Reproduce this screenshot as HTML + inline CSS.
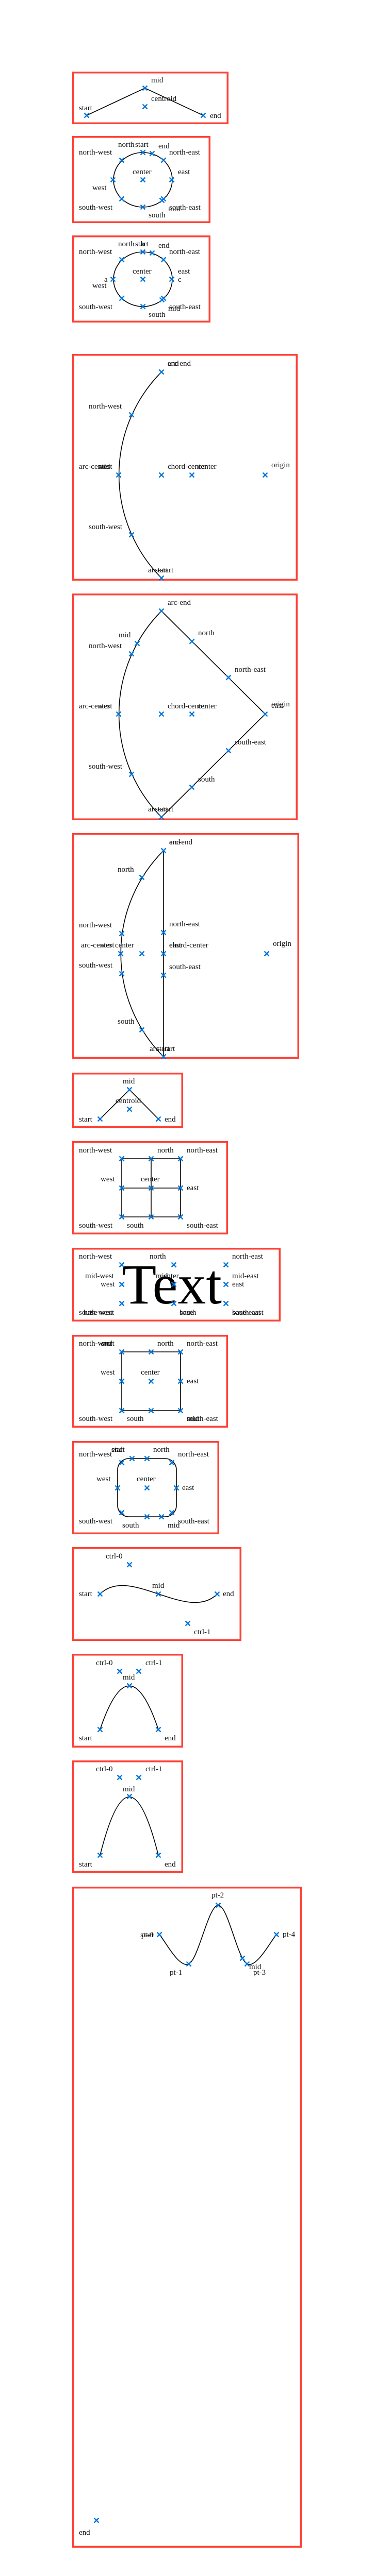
<!DOCTYPE html>
<html><head><meta charset="utf-8"><style>
html,body{margin:0;padding:0;background:#fff;width:727px;height:5175px;overflow:hidden;}
svg{display:block;position:absolute;left:0;top:0}
text{font-family:"Liberation Serif",serif;font-size:15px;fill:#111;}
.b{fill:none;stroke:#ff4136;stroke-width:3.5}
.l{fill:none;stroke:#000;stroke-width:1.6}
.m{fill:none;stroke:#0074d9;stroke-width:2.3}
</style></head><body>
<svg width="727" height="5175" viewBox="0 0 727 5175" xmlns="http://www.w3.org/2000/svg" overflow="hidden">
<defs><path id="x" class="m" d="M-4.5,-4.5L4.5,4.5M4.5,-4.5L-4.5,4.5"/></defs>

<rect class="b" x="141.75" y="140.75" width="299.5" height="98.5"/>
<path class="l" d="M168,224L281,171L394,224"/>
<use href="#x" x="168" y="224"/><use href="#x" x="281" y="171"/><use href="#x" x="281" y="207"/><use href="#x" x="394" y="224"/>
<text x="293" y="160">mid</text><text x="293" y="196">centroid</text><text x="153" y="214">start</text><text x="407" y="229">end</text>

<rect class="b" x="141.75" y="265.75" width="264.5" height="165.5"/>
<ellipse class="l" cx="277" cy="349" rx="57" ry="53"/>
<use href="#x" x="277" y="296"/><use href="#x" x="295" y="298"/><use href="#x" x="236" y="311"/><use href="#x" x="317" y="311"/><use href="#x" x="219" y="349"/><use href="#x" x="277" y="349"/><use href="#x" x="333" y="349"/><use href="#x" x="236" y="386"/><use href="#x" x="317" y="386"/><use href="#x" x="314" y="389"/><use href="#x" x="277" y="402"/>
<text x="229" y="285">north</text><text x="262" y="285">start</text><text x="307" y="288">end</text><text x="153" y="300">north-west</text><text x="328" y="300">north-east</text><text x="257" y="338">center</text><text x="345" y="338">east</text><text x="179" y="369">west</text><text x="153" y="407">south-west</text><text x="328" y="407">south-east</text><text x="326" y="410">mid</text><text x="288" y="422">south</text>

<rect class="b" x="141.75" y="458.75" width="264.5" height="165.5"/>
<ellipse class="l" cx="277" cy="542" rx="57" ry="53"/>
<use href="#x" x="277" y="489"/><use href="#x" x="295" y="491"/><use href="#x" x="236" y="504"/><use href="#x" x="317" y="504"/><use href="#x" x="219" y="542"/><use href="#x" x="277" y="542"/><use href="#x" x="333" y="542"/><use href="#x" x="236" y="579"/><use href="#x" x="317" y="579"/><use href="#x" x="314" y="582"/><use href="#x" x="277" y="595"/>
<text x="229" y="478">north</text><text x="262" y="478">start</text><text x="273" y="478">b</text><text x="307" y="481">end</text><text x="153" y="493">north-west</text><text x="328" y="493">north-east</text><text x="257" y="531">center</text><text x="345" y="531">east</text><text x="202" y="547">a</text><text x="345" y="547">c</text><text x="179" y="559">west</text><text x="153" y="600">south-west</text><text x="328" y="600">south-east</text><text x="326" y="603">mid</text><text x="288" y="615">south</text>

<rect class="b" x="141.75" y="688.75" width="433.5" height="436.5"/>
<path class="l" d="M313,1122A284,284 0 0 1 313,722"/>
<use href="#x" x="313" y="722"/><use href="#x" x="255" y="805"/><use href="#x" x="230" y="922"/><use href="#x" x="313" y="922"/><use href="#x" x="372" y="922"/><use href="#x" x="514" y="922"/><use href="#x" x="255" y="1038"/><use href="#x" x="313" y="1122"/>
<text x="325" y="710">arc-end</text><text x="325" y="710">end</text><text x="172" y="793">north-west</text><text x="153" y="910">arc-center</text><text x="190" y="910">west</text><text x="190" y="910">mid</text><text x="325" y="910">chord-center</text><text x="383" y="910">center</text><text x="526" y="907">origin</text><text x="172" y="1027">south-west</text><text x="287" y="1111">arc-start</text><text x="300" y="1111">start</text>

<rect class="b" x="141.75" y="1153.75" width="433.5" height="436.5"/>
<path class="l" d="M514,1386L313,1586A284,284 0 0 1 313,1186Z"/>
<use href="#x" x="313" y="1186"/><use href="#x" x="266" y="1249"/><use href="#x" x="255" y="1269"/><use href="#x" x="372" y="1245"/><use href="#x" x="443" y="1315"/><use href="#x" x="230" y="1386"/><use href="#x" x="313" y="1386"/><use href="#x" x="372" y="1386"/><use href="#x" x="514" y="1386"/><use href="#x" x="443" y="1457"/><use href="#x" x="372" y="1528"/><use href="#x" x="255" y="1503"/><use href="#x" x="313" y="1586"/>
<text x="325" y="1174">arc-end</text><text x="230" y="1237">mid</text><text x="172" y="1258">north-west</text><text x="384" y="1233">north</text><text x="455" y="1304">north-east</text><text x="153" y="1375">arc-center</text><text x="190" y="1375">west</text><text x="325" y="1375">chord-center</text><text x="383" y="1375">center</text><text x="526" y="1371">origin</text><text x="526" y="1374">east</text><text x="455" y="1445">south-east</text><text x="172" y="1492">south-west</text><text x="384" y="1517">south</text><text x="287" y="1575">arc-start</text><text x="300" y="1575">start</text>

<rect class="b" x="141.75" y="1618.75" width="436.5" height="434.5"/>
<path class="l" d="M317,2051A283,283 0 0 1 317,1651Z"/>
<use href="#x" x="317" y="1651"/><use href="#x" x="275" y="1703"/><use href="#x" x="236" y="1812"/><use href="#x" x="317" y="1810"/><use href="#x" x="234" y="1851"/><use href="#x" x="275" y="1851"/><use href="#x" x="317" y="1851"/><use href="#x" x="517" y="1851"/><use href="#x" x="236" y="1890"/><use href="#x" x="317" y="1893"/><use href="#x" x="275" y="1999"/><use href="#x" x="317" y="2051"/>
<text x="328" y="1639">arc-end</text><text x="328" y="1639">end</text><text x="228" y="1692">north</text><text x="153" y="1800">north-west</text><text x="328" y="1798">north-east</text><text x="157" y="1839">arc-center</text><text x="194" y="1839">west</text><text x="223" y="1839">center</text><text x="328" y="1839">chord-center</text><text x="328" y="1839">east</text><text x="529" y="1836">origin</text><text x="153" y="1878">south-west</text><text x="328" y="1881">south-east</text><text x="228" y="1987">south</text><text x="290" y="2040">arc-start</text><text x="303" y="2040">start</text>

<rect class="b" x="141.75" y="2083.75" width="211.5" height="103.5"/>
<path class="l" d="M194,2172L251,2115L307,2172"/>
<use href="#x" x="194" y="2172"/><use href="#x" x="251" y="2115"/><use href="#x" x="251" y="2153"/><use href="#x" x="307" y="2172"/>
<text x="238" y="2103">mid</text><text x="224" y="2141">centroid</text><text x="153" y="2177">start</text><text x="319" y="2177">end</text>

<rect class="b" x="141.75" y="2216.75" width="298.5" height="177.5"/>
<path class="l" d="M236,2249H350V2362H236ZM293,2249V2362M236,2306H350"/>
<use href="#x" x="236" y="2249"/><use href="#x" x="293" y="2249"/><use href="#x" x="350" y="2249"/><use href="#x" x="236" y="2306"/><use href="#x" x="293" y="2306"/><use href="#x" x="350" y="2306"/><use href="#x" x="236" y="2362"/><use href="#x" x="293" y="2362"/><use href="#x" x="350" y="2362"/>
<text x="153" y="2237">north-west</text><text x="305" y="2237">north</text><text x="362" y="2237">north-east</text><text x="195" y="2293">west</text><text x="273" y="2293">center</text><text x="362" y="2310">east</text><text x="153" y="2383">south-west</text><text x="246" y="2383">south</text><text x="362" y="2383">south-east</text>

<rect class="b" x="141.75" y="2423.75" width="400.5" height="139.5"/>
<text x="236" y="2530" style="font-size:110px;fill:#000">Text</text>
<use href="#x" x="236" y="2455"/><use href="#x" x="337" y="2455"/><use href="#x" x="438" y="2455"/><use href="#x" x="236" y="2493"/><use href="#x" x="337" y="2493"/><use href="#x" x="438" y="2493"/><use href="#x" x="236" y="2530"/><use href="#x" x="337" y="2530"/><use href="#x" x="438" y="2530"/>
<text x="153" y="2443">north-west</text><text x="290" y="2443">north</text><text x="450" y="2443">north-east</text><text x="165" y="2481">mid-west</text><text x="302" y="2481">mid</text><text x="310" y="2481">center</text><text x="450" y="2481">mid-east</text><text x="195" y="2497">west</text><text x="450" y="2497">east</text><text x="153" y="2552">south-west</text><text x="162" y="2552">base-west</text><text x="348" y="2552">south</text><text x="348" y="2552">base</text><text x="450" y="2552">south-east</text><text x="450" y="2552">base-east</text>

<rect class="b" x="141.75" y="2592.75" width="298.5" height="176.5"/>
<path class="l" d="M236,2624H350V2738H236Z"/>
<use href="#x" x="236" y="2624"/><use href="#x" x="293" y="2624"/><use href="#x" x="350" y="2624"/><use href="#x" x="236" y="2681"/><use href="#x" x="293" y="2681"/><use href="#x" x="350" y="2681"/><use href="#x" x="236" y="2738"/><use href="#x" x="293" y="2738"/><use href="#x" x="350" y="2738"/>
<text x="153" y="2612">north-west</text><text x="196" y="2612">start</text><text x="196" y="2612">end</text><text x="305" y="2612">north</text><text x="362" y="2612">north-east</text><text x="195" y="2668">west</text><text x="273" y="2668">center</text><text x="362" y="2685">east</text><text x="153" y="2758">south-west</text><text x="246" y="2758">south</text><text x="362" y="2758">south-east</text><text x="362" y="2758">mid</text>

<rect class="b" x="141.75" y="2798.75" width="281.5" height="177.5"/>
<rect class="l" x="228" y="2831" width="114" height="113" rx="22"/>
<use href="#x" x="256" y="2831"/><use href="#x" x="285" y="2831"/><use href="#x" x="236" y="2839"/><use href="#x" x="333" y="2839"/><use href="#x" x="228" y="2888"/><use href="#x" x="285" y="2888"/><use href="#x" x="342" y="2888"/><use href="#x" x="236" y="2936"/><use href="#x" x="285" y="2944"/><use href="#x" x="313" y="2944"/><use href="#x" x="333" y="2936"/>
<text x="216" y="2818">start</text><text x="216" y="2818">end</text><text x="297" y="2818">north</text><text x="153" y="2827">north-west</text><text x="345" y="2827">north-east</text><text x="187" y="2875">west</text><text x="265" y="2875">center</text><text x="353" y="2892">east</text><text x="153" y="2957">south-west</text><text x="345" y="2957">south-east</text><text x="237" y="2965">south</text><text x="325" y="2965">mid</text>

<rect class="b" x="141.75" y="3004.75" width="324.5" height="178.5"/>
<path class="l" d="M194,3094C251,3037 364,3151 421,3094"/>
<use href="#x" x="194" y="3094"/><use href="#x" x="251" y="3037"/><use href="#x" x="307" y="3094"/><use href="#x" x="364" y="3151"/><use href="#x" x="421" y="3094"/>
<text x="205" y="3025">ctrl-0</text><text x="153" y="3098">start</text><text x="295" y="3082">mid</text><text x="432" y="3098">end</text><text x="376" y="3172">ctrl-1</text>

<rect class="b" x="141.75" y="3211.75" width="211.5" height="178.5"/>
<path class="l" d="M194,3357C232,3244 269,3244 307,3357"/>
<use href="#x" x="194" y="3357"/><use href="#x" x="232" y="3244"/><use href="#x" x="269" y="3244"/><use href="#x" x="251" y="3272"/><use href="#x" x="307" y="3357"/>
<text x="186" y="3232">ctrl-0</text><text x="282" y="3232">ctrl-1</text><text x="238" y="3260">mid</text><text x="153" y="3378">start</text><text x="319" y="3378">end</text>

<rect class="b" x="141.75" y="3418.75" width="211.5" height="214.5"/>
<path class="l" d="M194,3601C232,3450 269,3450 307,3601"/>
<use href="#x" x="194" y="3601"/><use href="#x" x="232" y="3450"/><use href="#x" x="269" y="3450"/><use href="#x" x="251" y="3487"/><use href="#x" x="307" y="3601"/>
<text x="186" y="3438">ctrl-0</text><text x="282" y="3438">ctrl-1</text><text x="238" y="3477">mid</text><text x="153" y="3623">start</text><text x="319" y="3623">end</text>

<rect class="b" x="141.75" y="3663.75" width="441.5" height="1279.5"/>
<path class="l" d="M309,3755C318.5,3764.5 347,3821.5 366,3812C385,3802.5 404.2,3698 423,3698C441.8,3698 460.2,3802.5 479,3812C497.8,3821.5 526.5,3764.5 536,3755"/>
<use href="#x" x="309" y="3755"/><use href="#x" x="366" y="3812"/><use href="#x" x="423" y="3698"/><use href="#x" x="470" y="3801"/><use href="#x" x="479" y="3812"/><use href="#x" x="536" y="3755"/><use href="#x" x="187" y="4892"/>
<text x="298" y="3760" text-anchor="end">pt-0</text><text x="298" y="3760" text-anchor="end">start</text><text x="329" y="3833">pt-1</text><text x="410" y="3683">pt-2</text><text x="483" y="3822">mid</text><text x="491" y="3833">pt-3</text><text x="548" y="3759">pt-4</text><text x="153" y="4920">end</text>
</svg>
</body></html>
